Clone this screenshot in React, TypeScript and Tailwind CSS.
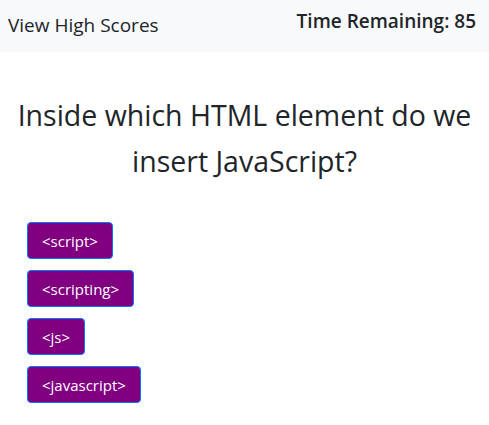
import React from 'react';

const choices = ['<script>', '<scripting>', '<js>', '<javascript>'];

export default function App() {
  return (
    <div className="min-h-screen bg-white text-[#212529] font-['Segoe_UI','Open_Sans',sans-serif]">
      {/* Top bar */}
      <nav className="h-[52px] bg-[#f8f9fa] flex items-start justify-between pl-2 pr-[13px]">
        <a className="text-[19px] leading-[30px] mt-[10px] text-[#212529]">View High Scores</a>
        <span className="text-[19px] leading-[28px] mt-[7px] font-semibold">Time Remaining: 85</span>
      </nav>

      {/* Question */}
      <h2 className="mt-10 px-3 text-center text-[28.5px] leading-[46px] font-normal">
        Inside which HTML element do we insert JavaScript?
      </h2>

      {/* Choices */}
      <div className="mt-[38px] pl-[27px] flex flex-col items-start gap-[11px]">
        {choices.map((c) => (
          <button
            key={c}
            className="h-[37px] px-[14px] bg-[#800080] border border-[#007bff] rounded text-white text-[15px] leading-[24px]"
          >
            {c}
          </button>
        ))}
      </div>
    </div>
  );
}
